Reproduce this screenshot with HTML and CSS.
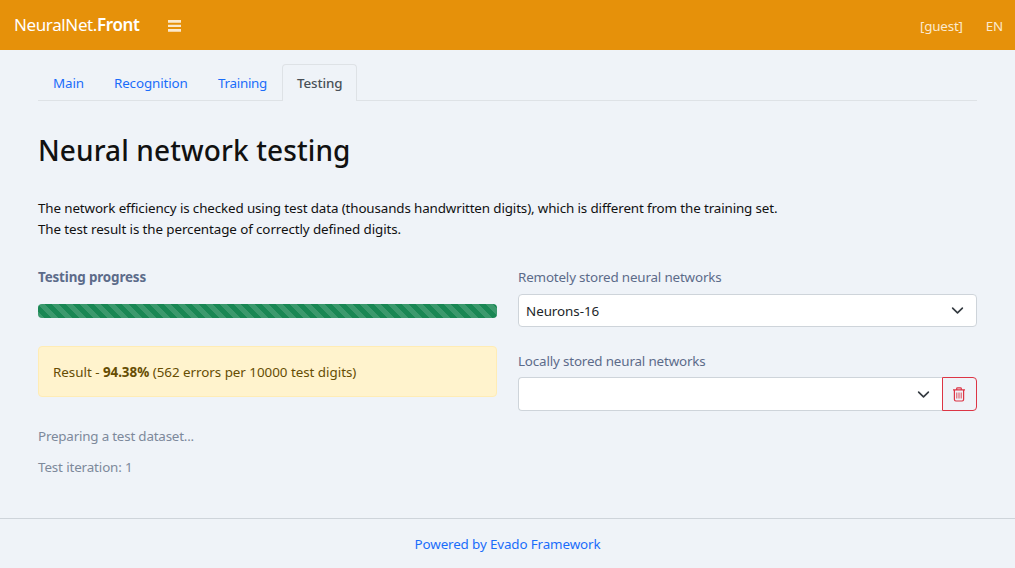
FILE: index.html
```html
<!DOCTYPE html>
<html lang="en">
<head>
<meta charset="utf-8">
<title>Neural network testing</title>
<link rel="stylesheet" href="styles.css">
</head>
<body>
<header class="navbar">
  <a class="brand"><span class="brand-light">NeuralNet.</span><b class="brand-bold">Front</b></a>
  <svg class="burger" width="13" height="12" viewBox="0 0 13 12" fill="currentColor"><path d="M0 0h13v2.8H0zM0 4.7h13v2.4H0zM0 9.1h13v2.6H0z"/></svg>
  <nav class="user-nav"><span class="guest">[guest]</span><span class="lang">EN</span></nav>
</header>
<main class="content">
  <nav class="tabs">
    <a class="tab tab-main"><span>Main</span></a>
    <a class="tab tab-recognition"><span>Recognition</span></a>
    <a class="tab tab-training"><span>Training</span></a>
    <a class="tab tab-testing active"><span>Testing</span></a>
  </nav>
  <h1 class="title"><span>Neural network testing</span></h1>
  <p class="intro"><span class="intro-first">The network efficiency is checked using test data (thousands handwritten digits), which is different from the training set.</span><br><span class="intro-second">The test result is the percentage of correctly defined digits.</span></p>
  <div class="columns">
    <section class="column">
      <div class="label label-bold"><span>Testing progress</span></div>
      <div class="progress"></div>
      <div class="alert"><span>Result - <b>94.38%</b> (562 errors per 10000 test digits)</span></div>
      <div class="log log-prepare"><span>Preparing a test dataset...</span></div>
      <div class="log"><span>Test iteration: 1</span></div>
    </section>
    <section class="column">
      <div class="label label-remote"><span>Remotely stored neural networks</span></div>
      <div class="select select-remote"><span>Neurons-16</span>
        <svg class="chevron" width="13" height="13" viewBox="0 0 16 16"><path d="m2 5 6 6 6-6"/></svg>
      </div>
      <div class="label label-local"><span>Locally stored neural networks</span></div>
      <div class="input-group">
        <div class="select select-local"><span></span>
          <svg class="chevron" width="13" height="13" viewBox="0 0 16 16"><path d="m2 5 6 6 6-6"/></svg>
        </div>
        <button class="delete" aria-label="Delete"><svg width="14" height="15" viewBox="0 0 14 15" fill="none" stroke="currentColor"><path d="M1 2.9h12M4.7 2.5V1.6q0-.8.8-.8h3q.8 0 .8.8v.9M2.4 3v9.6q0 1.4 1.4 1.4h6.4q1.4 0 1.4-1.4V3" stroke-width="1.2"/><path d="M4.8 5.5v6M7 5.5v6M9.2 5.5v6" stroke-width=".9"/></svg></button>
      </div>
    </section>
  </div>
</main>
<footer class="footer"><a>Powered by Evado Framework</a></footer>
</body>
</html>
```
FILE: styles.css
```css
* { box-sizing: border-box; }
body {
  margin: 0;
  height: 568px;
  display: flex;
  flex-direction: column;
  overflow: hidden;
  background: #eff3f8;
  color: #111;
  font: 13.4px/21px "Noto Sans", sans-serif;
  letter-spacing: -0.13px;
  white-space: nowrap;
}
.navbar {
  height: 50px;
  flex: none;
  display: flex;
  align-items: center;
  padding: 0 13px 0 14px;
  background: #e6910a;
  color: #fff;
}
.brand { width: 154px; margin-top: -2px; font-size: 17px; letter-spacing: -0.38px; }
.brand-bold { font-weight: 600; }
.burger { margin-top: 1px; color: #fbe9ce; }
.user-nav { margin-left: auto; display: flex; gap: 23px; padding-top: 3px; color: #fbe9ce; letter-spacing: -0.2px; }
.lang { margin-right: -1px; }
.content { flex: none; height: 468px; padding: 14px 38px 0; }
.tabs { display: flex; height: 37px; border-bottom: 1px solid #dee2e6; }
.tab {
  height: 37px;
  padding: 8px 14px;
  border: 1px solid transparent;
  border-bottom: 0;
  border-radius: 4px 4px 0 0;
  color: #1a6dfa;
}
.tab-main { width: 61px; }
.tab-recognition { width: 104px; }
.tab-training { width: 79px; letter-spacing: -0.28px; }
.tab-testing { width: 75px; }
.tab.active { border-color: #dee2e6; background: #eff3f8; color: #495057; font-weight: 500; }
.title { margin: 32px 0 0; font-size: 28px; line-height: 34px; font-weight: 500; letter-spacing: 0.12px; }
.intro { margin: 31px 0 0; }
.intro-second { letter-spacing: -0.1px; }
.columns { display: grid; grid-template-columns: 459px 459px; gap: 21px; margin-top: 27px; }
.label { height: 21px; color: #5c6b8a; }
.label-bold { font-weight: 700; }
.label-remote { letter-spacing: -0.17px; }
.progress {
  height: 14px;
  margin-top: 16px;
  border-radius: 4px;
  background-color: #198754;
  background-image: linear-gradient(45deg, rgba(255,255,255,.15) 25%, transparent 25%, transparent 50%, rgba(255,255,255,.15) 50%, rgba(255,255,255,.15) 75%, transparent 75%, transparent);
  background-size: 14px 14px;
}
.alert {
  height: 51px;
  margin: 28px 0 29px;
  padding: 15px 14px;
  border: 1px solid #ffecb5;
  border-radius: 4px;
  background: #fff3cd;
  color: #664d03;
  letter-spacing: -0.03px;
}
.log { margin-bottom: 10px; color: #7d899b; }
.log-prepare { letter-spacing: -0.2px; }
.select {
  height: 33px;
  margin-top: 6px;
  display: flex;
  align-items: center;
  justify-content: space-between;
  padding: 0 12px 0 7px;
  border: 1px solid #ced4da;
  border-radius: 4px;
  background: #fff;
  color: #212529;
}
.select-remote { padding-top: 1px; letter-spacing: -0.05px; }
.chevron { fill: none; stroke: #343a40; stroke-width: 2; stroke-linecap: round; stroke-linejoin: round; }
.select-remote .chevron { margin-top: -2px; }
.label-local { margin-top: 24px; letter-spacing: -0.16px; }
.input-group { display: flex; margin-top: 5px; }
.select-local { flex: 1; height: 34px; margin: 0; border-right: 0; border-radius: 4px 0 0 4px; }
.delete {
  width: 35px;
  height: 34px;
  display: grid;
  place-items: center;
  padding: 1px 1px 0 0;
  border: 1px solid #dc3545;
  border-radius: 0 4px 4px 0;
  background: transparent;
  color: #dc3545;
}
.footer { flex: 1; padding-top: 15px; border-top: 1px solid #ced4da; text-align: center; color: #1a6dfa; }
```
